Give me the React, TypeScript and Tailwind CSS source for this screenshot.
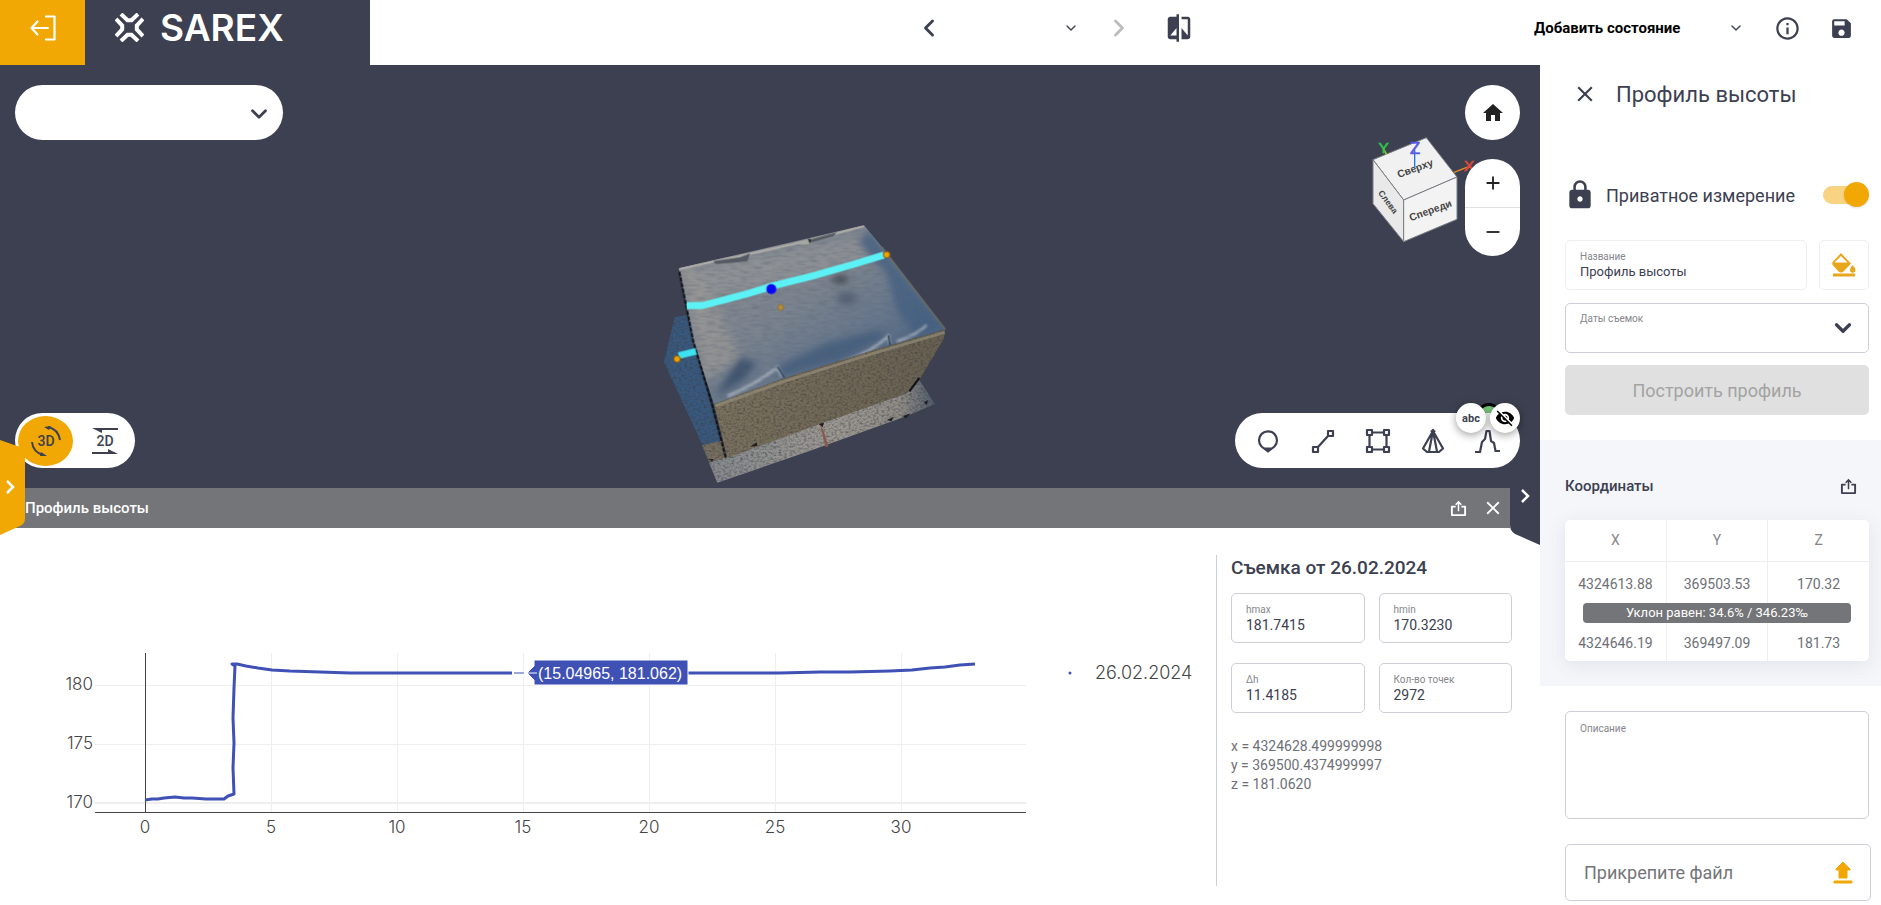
import React, { useState } from 'react';
import { ChevronDown, ChevronLeft, ChevronRight } from 'lucide-react';
import {
  MdAdd,
  MdClose,
  MdCompare,
  MdHome,
  MdInfoOutline,
  MdLock,
  MdRemove,
  MdSave,
  MdVisibilityOff,
} from 'react-icons/md';

const xTicks = [0, 5, 10, 15, 20, 25, 30];
const yTicks = [180, 175, 170];

const xPos = (v: number) => Math.round(145 + v * 25.2);
const yPos = (v: number) => Math.round(275 - (v - 170) * 11.8);

const profile: [number, number][] = [
  [145, 272], [152, 271], [158, 271], [164, 270], [175, 269], [184, 270], [192, 270], [206, 271], [216, 271],
  [224, 271], [228, 268], [234, 266], [233, 240], [234, 215], [233, 190], [234, 160], [235, 138], [232, 136],
  [237, 136], [246, 138], [258, 140], [272, 142], [290, 143], [320, 144], [350, 145], [390, 145], [430, 145],
  [480, 145], [520, 145], [620, 145], [700, 145], [780, 145], [820, 144], [850, 144], [890, 143], [912, 142],
  [930, 140], [945, 139], [960, 137], [975, 136],
];

const ShareIcon: React.FC<{ className?: string }> = ({ className }) => (
  <svg viewBox="0 0 18 18" className={className} fill="none" stroke="currentColor" strokeWidth="2">
    <path d="M6 7H2v9h14V7h-4" strokeLinejoin="round" />
    <path d="M9 12V2M6 5l3-3 3 3" strokeWidth="1.6" />
  </svg>
);

const Logo: React.FC = () => (
  <div className="flex items-center gap-4 text-white">
    <svg viewBox="0 0 29 29" className="w-[29px] h-[29px]" fill="none" stroke="currentColor" strokeWidth="4">
      <path d="M6 1L12.500 7.200H16.500L23 1M6 28L12.500 21.800H16.500L23 28" />
      <path d="M1 6L7.200 12.500V16.500L1 23M28 6L21.800 12.500V16.500L28 23" />
    </svg>
    <span className="font-['Inter'] text-[37px] leading-none font-semibold">SAREX</span>
  </div>
);

const Header: React.FC = () => (
  <header className="flex h-[65px] bg-white text-[#3c4050]">
    <div className="flex w-[370px] bg-[#3c4050] pb-[10px]">
      <button type="button" aria-label="Выйти" className="-mb-[10px] flex w-[85px] items-center justify-center bg-[#f1a704] pb-[9px] text-white">
        <svg viewBox="0 0 26 26" className="w-[26px] h-[26px]" fill="none" stroke="currentColor" strokeWidth="2.200" strokeLinecap="round" strokeLinejoin="round">
          <path d="M16 1.500H24.500V24.500H16M18 13H1.500M7.500 6.500L1.500 13L7.500 19.500" />
        </svg>
      </button>
      <div className="flex items-center pl-[30px]">
        <Logo />
      </div>
    </div>
    <div className="flex flex-1 items-center justify-end pb-[9px]">
      <button type="button" aria-label="Назад"><ChevronLeft className="size-7" strokeWidth={2.5} /></button>
      <div className="relative">
        <select aria-label="Состояние" className="h-8 w-[136px] appearance-none bg-transparent"><option></option></select>
        <ChevronDown className="pointer-events-none absolute right-0 top-2 size-4" />
      </div>
      <button type="button" aria-label="Вперёд" className="ml-[26px] text-[#bdbdbd]"><ChevronRight className="size-7" strokeWidth={2.5} /></button>
      <button type="button" aria-label="Сравнить" className="ml-[31px]"><MdCompare className="size-[30px]" /></button>
    </div>
    <div className="ml-[340px] flex items-center pb-[9px] pr-[27px]">
      <div className="relative">
        <select aria-label="Действие" className="w-[210px] appearance-none bg-transparent text-[15px] font-bold text-black">
          <option>Добавить состояние</option>
        </select>
        <ChevronDown className="pointer-events-none absolute right-0 top-1 size-4" />
      </div>
      <button type="button" aria-label="Информация" className="ml-[30px]"><MdInfoOutline className="size-[27px]" /></button>
      <button type="button" aria-label="Сохранить" className="ml-7"><MdSave className="size-[25px]" /></button>
    </div>
  </header>
);

const Model: React.FC = () => (
  <svg viewBox="0 0 990 864" className="absolute bottom-0 left-1/2 -ml-[130px] w-[330px] h-[288px]">
    <defs>
      <linearGradient id="roof" x1="0.100" y1="0.100" x2="0.850" y2="0.900">
        <stop offset="0" stopColor="#8b8f94" />
        <stop offset="0.450" stopColor="#7b838e" />
        <stop offset="0.700" stopColor="#65768c" />
        <stop offset="1" stopColor="#3f5a7c" />
      </linearGradient>
      <linearGradient id="wall" x1="0" y1="0" x2="1" y2="0">
        <stop offset="0" stopColor="#7b725f" />
        <stop offset="1" stopColor="#686151" />
      </linearGradient>
      <linearGradient id="ground" x1="0" y1="0" x2="1" y2="0">
        <stop offset="0" stopColor="#868a8f" />
        <stop offset="0.550" stopColor="#9d9994" />
        <stop offset="0.850" stopColor="#908d88" />
        <stop offset="1" stopColor="#4f5b6c" />
      </linearGradient>
      <filter id="grain" x="0" y="0" width="100%" height="100%">
        <feTurbulence type="fractalNoise" baseFrequency="0.120 0.160" numOctaves="2" seed="4" />
        <feColorMatrix values="0 0 0 0 0.050  0 0 0 0 0.050  0 0 0 0 0.050  1.600 0 0 0 -0.620" />
        <feComposite in2="SourceGraphic" operator="in" result="n" />
        <feMerge><feMergeNode in="SourceGraphic" /><feMergeNode in="n" /></feMerge>
      </filter>
      <filter id="weave" x="0" y="0" width="100%" height="100%">
        <feTurbulence type="fractalNoise" baseFrequency="0.030 0.150" numOctaves="2" seed="9" />
        <feColorMatrix values="0 0 0 0 0.100  0 0 0 0 0.130  0 0 0 0 0.180  1 0 0 0 -0.420" />
        <feComposite in2="SourceGraphic" operator="in" />
      </filter>
      <filter id="soft" x="-30%" y="-30%" width="160%" height="160%"><feGaussianBlur stdDeviation="11" /></filter>
      <filter id="crease" x="-30%" y="-30%" width="160%" height="160%"><feGaussianBlur stdDeviation="3" /></filter>
      <clipPath id="roofClip"><path d="M116 205L672 76L725 140L916 388L700 450L430 535L222 612L160 425Z" /></clipPath>
    </defs>
    <g filter="url(#grain)">
      <path d="M104 352L140 345L245 728L186 733L72 486Z" fill="#385a80" />
      <path d="M186 736L245 722L262 775L207 785Z" fill="#777061" />
      <path d="M207 788L262 772L345 735L535 672L800 580L838 540L885 612L800 648L500 756L232 848Z" fill="url(#ground)" />
      <path d="M222 612L430 535L700 450L916 388L912 415L838 540L800 580L540 672L262 774Z" fill="url(#wall)" />
    </g>
    <path d="M226 618L430 545L700 460L914 397" fill="none" stroke="#948c79" strokeWidth="9" opacity="0.700" />
    <path d="M540 674L550 690L566 740L556 740Z" fill="#88594b" />
    <path d="M330 740L350 727L352 738ZM740 660L762 650L754 664ZM536 672L552 668L548 682ZM788 648L812 640L798 655ZM852 606L864 600L860 616ZM204 776L222 778L216 784Z" fill="#202020" />
    <path d="M808 574L838 534" stroke="#15171c" strokeWidth="7" />
    <g clipPath="url(#roofClip)">
      <rect x="110" y="70" width="810" height="550" fill="url(#roof)" />
      <g filter="url(#soft)">
        <path d="M690 90L916 388L830 410L770 330L740 220L650 130Z" fill="#405d82" opacity="0.750" />
        <path d="M225 590L300 470L350 490L310 540Z" fill="#354c6a" opacity="0.850" />
        <path d="M410 500L560 430L720 390L735 410L600 480L430 530Z" fill="#3c5879" opacity="0.750" />
        <path d="M130 210L180 215L300 470L190 550Z" fill="#a39f98" opacity="0.550" />
        <path d="M180 210L650 110L690 180L500 240L210 290Z" fill="#999a9a" opacity="0.500" />
        <ellipse cx="600" cy="238" rx="25" ry="11" fill="#393e45" />
        <ellipse cx="620" cy="295" rx="30" ry="20" fill="#47556a" opacity="0.700" />
      </g>
      <path d="M262 588Q345 555 412 502L424 530M600 488Q690 460 745 408L748 432M770 425Q830 405 860 375" fill="none" stroke="#c3c9d0" strokeWidth="8" opacity="0.700" filter="url(#crease)" />
      <path d="M412 500L434 534M745 406L750 436" stroke="#34465f" strokeWidth="5" />
      <rect x="110" y="70" width="810" height="550" fill="#000" filter="url(#weave)" />
      <path d="M118 207L225 183L300 168L460 132L590 100L672 78" fill="none" stroke="#b2b0aa" strokeWidth="6" />
    </g>
    <path d="M725 140L916 388" stroke="#6d6a60" strokeWidth="4" />
    <path d="M220 183L300 172L330 160L322 184L228 192ZM500 122L590 97L580 108L505 130Z" fill="#545963" />
    <path d="M472 130L512 114L514 132L482 134Z" fill="#a8a6a1" />
    <path d="M503 116L514 118L510 132Z" fill="#24262b" />
    <path d="M118 215L160 425L215 610L258 776" fill="none" stroke="#0d0f13" strokeWidth="6" strokeDasharray="14 3" />
    <path d="M140 317L185 317L240 303L330 279L400 257L520 227L640 193L732 165" fill="none" stroke="#5cf2f5" strokeWidth="21" />
    <path d="M116 467L168 454" stroke="#3ee1ef" strokeWidth="20" />
    <circle cx="394" cy="267" r="15" fill="#0707f5" />
    <circle cx="740" cy="164" r="10" fill="#f0a000" stroke="#775617" strokeWidth="3" />
    <circle cx="111" cy="477" r="10" fill="#f0a000" stroke="#775617" strokeWidth="3" />
    <circle cx="422" cy="322" r="9" fill="#b48b38" stroke="#806735" strokeWidth="2" />
  </svg>
);

const ViewCube: React.FC = () => (
  <svg viewBox="150 190 321 339" className="absolute right-[63px] top-[68px] w-[107px] h-[113px] font-['Liberation_Sans']">
    <g stroke="#7b7d82" strokeWidth="3" strokeLinejoin="round">
      <path d="M159 270L319 204L411 322L251 391Z" fill="#f1f1f1" />
      <path d="M159 270L251 391V516L159 402Z" fill="#e9e9e9" />
      <path d="M251 391L411 322V449L251 516Z" fill="#f3f3f3" />
    </g>
    <g fontWeight="700" fill="#444" textAnchor="middle" fontSize="31">
      <text transform="translate(289 306) rotate(-20)">Сверху</text>
      <text transform="translate(335 432) rotate(-20)">Спереди</text>
      <text transform="translate(197 402) rotate(53)" fontSize="26">Слева</text>
    </g>
    <path d="M284 296V240" stroke="#1b78e8" strokeWidth="4" />
    <path d="M200 255L190 236" stroke="#b6d929" strokeWidth="4" />
    <path d="M402 308L448 290" stroke="#ee8b24" strokeWidth="4" />
    <g fontSize="46" textAnchor="middle" strokeWidth="2">
      <text x="191" y="250" fill="#2ec448" stroke="#2ec448">Y</text>
      <text x="285" y="254" fill="#555be0" stroke="#555be0" fontSize="50">Z</text>
      <text x="447" y="305" fill="#dc4a3a" stroke="#dc4a3a">X</text>
    </g>
  </svg>
);

const ModeSwitch: React.FC = () => {
  const [mode, setMode] = useState('3d');
  const active = 'bg-[#f1a704]';
  return (
    <div className="absolute bottom-5 left-[15px] flex h-[55px] w-[120px] items-center gap-1 rounded-full bg-white px-[3px] text-[#3c4050]">
      <button type="button" aria-label="3D" onClick={() => setMode('3d')} className={`flex h-[50px] w-[55px] items-center justify-center rounded-[50%] ${mode === '3d' ? active : ''}`}>
        <svg viewBox="0 0 32 32" className="size-8" fill="none" stroke="currentColor" strokeWidth="2">
          <text x="16" y="21" textAnchor="middle" fontSize="14" fontWeight="500" fill="currentColor" stroke="none">3D</text>
          <path d="M18 2Q28 4 30 15M2 17Q3 27 13 30" />
          <path d="M14 2L21 1L19 5ZM17 31L11 27L10 31Z" fill="currentColor" stroke="none" />
        </svg>
      </button>
      <button type="button" aria-label="2D" onClick={() => setMode('2d')} className={`flex h-[50px] w-[55px] items-center justify-center rounded-[50%] ${mode === '2d' ? active : ''}`}>
        <svg viewBox="0 0 32 32" className="size-8" fill="none" stroke="currentColor" strokeWidth="2">
          <text x="16" y="21" textAnchor="middle" fontSize="14" fontWeight="500" fill="currentColor" stroke="none">2D</text>
          <path d="M7 4H29M3 28H26" />
          <path d="M3 3H13V8ZM29 29H19V24Z" fill="currentColor" stroke="none" />
        </svg>
      </button>
    </div>
  );
};

const tools = [
  { name: 'Точка', icon: <path d="M5.500 17.500A9 9 0 1 1 18.500 17.500L12 22.500ZM8.500 19.500H15.500L12 22.500ZM10 20.500H14" /> },
  { name: 'Линия', icon: <path d="M2 18H7V23H2ZM17 2H22V7H17ZM7 18L17 7" /> },
  { name: 'Полигон', icon: <path d="M1 1H6V6H1ZM18 1H23V6H18ZM1 18H6V23H1ZM18 18H23V23H18ZM6 3.500H18M6 20.500H18M3.500 6V18M20.500 6V18" /> },
  { name: 'Объём', icon: <path d="M12 2L2 19.500L6 23H18L22 19.500ZM12 2L8 22.500M12 2L16 22.500M10 3L12 1L14 3" /> },
  { name: 'Профиль', icon: <path d="M-1 23H4L6 13L9 10L10.500 2H13.500L15 12L18 14L19.500 22H24" /> },
];

const Toolbar: React.FC = () => (
  <div className="absolute bottom-5 right-5">
    <span className="absolute -top-[10px] right-[18px] size-[26px] rounded-full border-3 border-black bg-[#79c97c]"></span>
    <div className="relative flex h-[55px] rounded-full bg-white px-[5px] text-[#3c4050]">
      {tools.map(t => (
        <button key={t.name} type="button" aria-label={t.name} className="flex w-[55px] items-center justify-center">
          <svg viewBox="0 0 24 24" className="size-6 overflow-visible" fill="none" stroke="currentColor" strokeWidth="2.200" strokeLinejoin="round">{t.icon}</svg>
        </button>
      ))}
    </div>
    <div className="absolute -top-[10px] right-0 flex gap-1">
      <button type="button" className="size-[30px] rounded-full bg-white text-[11px] leading-none font-bold text-[#3c4050] shadow-[0_2px_8px_rgba(0,0,0,0.4)]">abc</button>
      <button type="button" aria-label="Скрыть" className="flex size-[30px] items-center justify-center rounded-full bg-white text-black shadow-[0_2px_8px_rgba(0,0,0,0.4)]">
        <MdVisibilityOff className="size-5" />
      </button>
    </div>
  </div>
);

const Viewport: React.FC = () => (
  <section className="relative min-h-[423px] flex-1 bg-[#3c4050]">
    <Model />
    <div className="absolute left-[15px] top-5">
      <select aria-label="Слой" className="h-[55px] w-[268px] appearance-none rounded-full bg-white"><option></option></select>
      <ChevronDown className="pointer-events-none absolute right-[11px] top-4 size-[26px] text-[#3c4050]" strokeWidth={2.5} />
    </div>
    <ViewCube />
    <div className="absolute right-5 top-5 flex w-[55px] flex-col gap-[19px] text-[#222]">
      <button type="button" aria-label="Домой" className="flex h-[55px] items-center justify-center rounded-full bg-white">
        <MdHome className="size-6" />
      </button>
      <div className="flex h-[97px] flex-col divide-y divide-[#e0e0e0] rounded-full bg-white">
        <button type="button" aria-label="Приблизить" className="flex flex-1 items-center justify-center"><MdAdd className="size-[22px]" /></button>
        <button type="button" aria-label="Отдалить" className="flex flex-1 items-center justify-center"><MdRemove className="size-[22px]" /></button>
      </div>
    </div>
    <ModeSwitch />
    <Toolbar />
    <button type="button" aria-label="Открыть панель" className="absolute -bottom-[47px] left-0 z-10 h-[95px] w-[25px]">
      <svg viewBox="0 0 25 95" className="h-full w-full">
        <path d="M0 0L20 7Q25 9 25 15V78Q25 84 20 86L0 95Z" fill="#f1a704" />
        <path d="M7 41L13 47L7 53" fill="none" stroke="#fff" strokeWidth="2.500" />
      </svg>
    </button>
    <button type="button" aria-label="Свернуть панель" className="absolute -bottom-[57px] right-0 z-10 h-[98px] w-[30px]">
      <svg viewBox="0 0 30 98" className="h-full w-full">
        <path d="M30 0L5 11Q0 14 0 20V78Q0 84 5 87L30 98Z" fill="#3c4050" />
        <path d="M12 43L18 49L12 55" fill="none" stroke="#fff" strokeWidth="2.500" />
      </svg>
    </button>
  </section>
);

const Chart: React.FC = () => (
  <svg viewBox="0 0 1216 377" className="min-w-0 flex-1 self-start font-['Inter'] font-light" fontSize="17">
    <g stroke="#eee" shapeRendering="crispEdges">
      {xTicks.slice(1).map(x => <line key={x} x1={xPos(x)} x2={xPos(x)} y1="125" y2="284" />)}
      {yTicks.map(y => <line key={y} x1="95" x2="1026" y1={yPos(y)} y2={yPos(y)} strokeWidth={y === 170 ? 2 : 1} />)}
    </g>
    <path d="M145 125V284M95 284H1026" stroke="#444" shapeRendering="crispEdges" />
    <g fill="#444">
      {xTicks.map(x => <text key={x} x={xPos(x)} y="305" textAnchor="middle">{x}</text>)}
      {yTicks.map(y => <text key={y} x="93" y={yPos(y) + 5} textAnchor="end">{y}</text>)}
    </g>
    <polyline points={profile.map(p => p.join(',')).join(' ')} fill="none" stroke="#3f51b5" strokeWidth="3" strokeLinejoin="round" />
    <path d="M512 145H530" stroke="#fff" strokeWidth="4" />
    <path d="M514 145H524" stroke="#3f51b5" />
    <path d="M527 145L534 138V132H688V157H534V152Z" fill="#3f51b5" stroke="#fff" />
    <path d="M528 145H537" stroke="#fff" />
    <text x="538" y="151" fill="#fff" fontSize="16" fontWeight="400" fontFamily="Liberation Sans">(15.04965, 181.062)</text>
    <circle cx="1070" cy="145" r="1.500" fill="#3f51b5" />
    <text x="1095" y="151" fill="#444" fontSize="18">26.02.2024</text>
  </svg>
);

const stats = [
  { id: 'hmax', label: 'hmax', value: '181.7415' },
  { id: 'hmin', label: 'hmin', value: '170.3230' },
  { id: 'dh', label: 'Δh', value: '11.4185' },
  { id: 'count', label: 'Кол-во точек', value: '2972' },
];

const ProfilePanel: React.FC = () => (
  <section className="bg-white">
    <div className="mr-[30px] flex h-10 items-center bg-[#747578] pl-[25px] pr-[6px] text-white">
      <h2 className="flex-1 text-[15px] font-medium">Профиль высоты</h2>
      <button type="button" aria-label="Экспорт"><ShareIcon className="size-[17px]" /></button>
      <button type="button" aria-label="Закрыть" className="ml-[15px]"><MdClose className="size-[22px]" /></button>
    </div>
    <div className="flex h-[377px]">
      <Chart />
      <div className="mb-[19px] mt-[27px] w-[324px] border-l border-[#cdcfd6] pl-[14px] pr-7 text-[#3c4050]">
        <h3 className="text-[19px] leading-[26px] font-medium">Съемка от 26.02.2024</h3>
        <div className="mt-3 grid grid-cols-2 gap-x-[14px] gap-y-5">
          {stats.map(s => (
            <label key={s.id} className="flex h-[50px] flex-col justify-center rounded-[5px] border border-[#cdcfd6] pl-[14px]">
              <span className="text-[10px] leading-[14px] text-[#85868c]">{s.label}</span>
              <input readOnly defaultValue={s.value} className="h-4 w-full text-[14px] leading-4 outline-none" />
            </label>
          ))}
        </div>
        <div className="mt-6 text-[14px] leading-[19px] text-[#6e7077]">
          <p>x = 4324628.499999998</p>
          <p>y = 369500.4374999997</p>
          <p>z = 181.0620</p>
        </div>
      </div>
    </div>
  </section>
);

const Sidebar: React.FC = () => {
  const [isPrivate, setIsPrivate] = useState(true);

  return (
    <aside className="w-[341px] bg-white text-[#3c4050]">
      <div className="pb-[25px] pl-[25px] pr-3">
        <div className="flex h-[58px] items-center">
          <button type="button" aria-label="Закрыть" className="ml-[7px]"><MdClose className="size-[26px]" /></button>
          <h1 className="ml-[18px] text-[22px]">Профиль высоты</h1>
        </div>
        <label className="mt-[42px] flex h-[60px] items-center">
          <MdLock className="-ml-px size-8" />
          <span className="ml-[10px] flex-1 text-[18px]">Приватное измерение</span>
          <span className="relative h-[18px] w-[46px]">
            <input type="checkbox" checked={isPrivate} onChange={(e) => setIsPrivate(e.target.checked)} className="absolute inset-0 appearance-none" />
            <span className="pointer-events-none absolute inset-y-0 left-0 right-1 rounded-full bg-[#f8d382]"></span>
            <span className={`pointer-events-none absolute -top-1 size-[25px] rounded-full bg-[#f1a704] shadow ${isPrivate ? 'right-0' : 'left-0'}`}></span>
          </span>
        </label>
        <div className="mt-[15px] flex gap-3">
          <label className="flex h-[50px] flex-1 flex-col justify-center rounded-[5px] border border-[#eceef1] pl-[14px]">
            <span className="text-[10px] leading-[14px] text-[#85868c]">Название</span>
            <input defaultValue="Профиль высоты" className="h-4 w-full text-[13px] leading-4 outline-none" />
          </label>
          <button type="button" aria-label="Цвет" className="flex size-[50px] items-center justify-center rounded-[5px] border border-[#eceef1] text-[#e8a61c]">
            <svg viewBox="0 0 24 24" className="size-6" fill="currentColor">
              <path d="M9 0L19 10.500L11.500 18.500Q9 20.500 6.500 18.500L1 12.500Q-.5 10.500 1 8.500ZM9 3L2.500 9.500H15.500Z" fillRule="evenodd" />
              <path d="M20.500 12Q18 15 18 17A2.700 2.700 0 0 0 23.500 17Q23.500 15 20.500 12ZM1 20.500H23V23.500H1Z" />
            </svg>
          </button>
        </div>
        <label className="relative mt-[13px] flex h-[50px] flex-col rounded-[5px] border border-[#cdcfd6] pl-[14px] pt-2">
          <span className="text-[10px] leading-[14px] text-[#85868c]">Даты съемок</span>
          <select className="w-full appearance-none bg-transparent"><option></option></select>
          <ChevronDown className="pointer-events-none absolute right-3 top-[11px] size-[26px]" strokeWidth={3} />
        </label>
        <button type="button" disabled className="mt-3 h-[50px] w-full rounded-[5px] bg-[#e0e0e0] text-[18px] text-[#a3a3a3]">Построить профиль</button>
      </div>

      <div className="bg-[#f4f6fa] pb-[25px] pl-[25px] pr-3 pt-[26px]">
        <div className="flex h-10 items-center justify-between pr-3">
          <h2 className="text-[15px] font-medium">Координаты</h2>
          <button type="button" aria-label="Экспорт"><ShareIcon className="size-[17px]" /></button>
        </div>
        <div className="relative mt-[14px] rounded-[5px] bg-white shadow-[0_4px_20px_rgba(60,64,80,0.1)]">
          <table className="w-full table-fixed text-center text-[14px] text-[#6e7077]">
            <thead>
              <tr className="h-[41px] divide-x divide-[#eceef1] border-b border-[#eceef1] text-[#85868c]">
                <th className="font-normal">X</th>
                <th className="font-normal">Y</th>
                <th className="font-normal">Z</th>
              </tr>
            </thead>
            <tbody>
              <tr className="h-[50px] divide-x divide-[#eceef1]">
                <td className="pb-1">4324613.88</td>
                <td className="pb-1">369503.53</td>
                <td className="pb-1">170.32</td>
              </tr>
              <tr className="h-[50px] divide-x divide-[#eceef1]">
                <td className="pt-[14px]">4324646.19</td>
                <td className="pt-[14px]">369497.09</td>
                <td className="pt-[14px]">181.73</td>
              </tr>
            </tbody>
          </table>
          <p className="absolute inset-x-[18px] top-[83px] h-5 rounded-[4px] bg-[#747578] text-center text-[13px] leading-5 text-white">Уклон равен: 34.6% / 346.23‰</p>
        </div>
      </div>

      <div className="pb-[3px] pl-[25px] pr-[10px] pt-[25px]">
        <label className="mr-[2px] flex h-[108px] flex-col rounded-[5px] border border-[#cdcfd6] px-[14px] pt-[10px]">
          <span className="text-[10px] leading-[14px] text-[#85868c]">Описание</span>
          <textarea className="w-full flex-1 resize-none text-[13px] outline-none"></textarea>
        </label>
        <button type="button" className="mt-[25px] flex h-[57px] w-full items-center justify-between rounded-[5px] border border-[#cdcfd6] pl-[18px] pr-3 text-[18px] text-[#747578]">
          Прикрепите файл
          <svg viewBox="0 0 30 30" className="size-[30px] text-[#f1a704]" fill="currentColor">
            <path d="M15 4L22 11V12H19V20H11V12H8V11ZM6 23H24V25H6Z" stroke="currentColor" strokeLinejoin="round" />
          </svg>
        </button>
      </div>
    </aside>
  );
};

const App: React.FC = () => (
  <div className="flex min-h-screen flex-col bg-white font-['Roboto',sans-serif]">
    <Header />
    <div className="flex flex-1">
      <main className="flex min-w-0 flex-1 flex-col">
        <Viewport />
        <ProfilePanel />
      </main>
      <Sidebar />
    </div>
  </div>
);

export default App;
